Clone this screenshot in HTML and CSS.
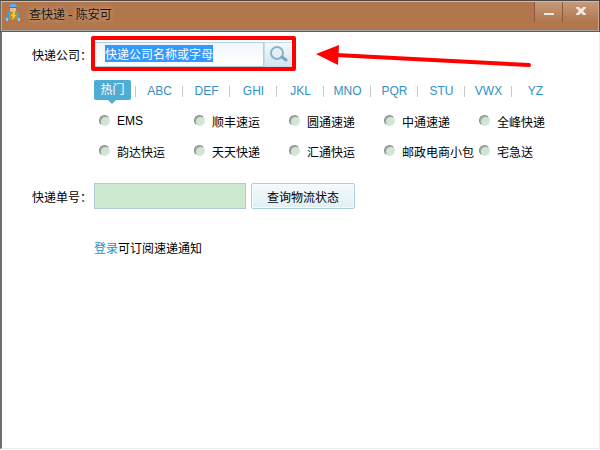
FILE: index.html
```html
<!DOCTYPE html>
<html lang="zh-CN">
<head>
  <meta charset="UTF-8">
  <meta name="viewport" content="width=device-width, initial-scale=1.0">
  <title>查快递 - 陈安可</title>
  <link rel="stylesheet" href="styles.css">
</head>
<body>
<div class="window">
  <header class="titlebar">
    <svg class="app-icon" width="14" height="18" viewBox="0 0 14 18">
      <path d="M1 9L3 7H11L13 9V16H1Z" fill="#3a9ce0"/>
      <path d="M4 4H10V7L8 8H6L4 7Z" fill="#e9bd91"/>
      <path d="M3 4V2L5 0H9L11 2V4Z" fill="#55b4ee"/>
      <path d="M3 3H11V4H3Z" fill="#2c7fc2"/>
      <path d="M0 14H2V17H0ZM12 14H14V17H12Z" fill="#8ccbf3"/>
      <path d="M3 8H12V16H3Z" fill="#c5882e"/>
      <path d="M8 8L5 12H7L6 16L10 11H8L9 8Z" fill="#ffe92e"/>
    </svg>
    <h1 class="title">查快递 - 陈安可</h1>
    <div class="window-buttons">
      <button class="window-button minimize" aria-label="最小化">
        <svg width="10" height="10" viewBox="0 0 10 10"><path d="M0 7H10V9H0Z" fill="#f3e8df"/></svg>
      </button>
      <button class="window-button close" aria-label="关闭">
        <svg width="10" height="10" viewBox="0 0 10 10"><path d="M0 1H3L5 3L7 1H10V2L7 5L10 8V9H7L5 7L3 9H0V8L3 5L0 2V1Z" fill="#f3e8df"/></svg>
      </button>
    </div>
  </header>
  <main class="content">
    <div class="row">
      <label class="row-label" for="company">快递公司：</label>
      <div class="search">
        <div class="search-field">
          <input type="text" class="search-input" id="company" value="快递公司名称或字母">
        </div>
        <button class="search-button" aria-label="搜索">
          <svg width="18" height="16" viewBox="0 0 18 16" fill="none">
            <circle cx="7" cy="7" r="6" fill="#e3f1f7" stroke="#8bb3c6" stroke-width="2"/>
            <path d="M12 11L16 14" stroke="#7ba6bb" stroke-width="3" stroke-linecap="round"/>
          </svg>
        </button>
        <div class="highlight"></div>
        <svg class="arrow" width="216" height="24" viewBox="0 0 216 24">
          <path d="M20 10L213 20" stroke="#ff0000" stroke-width="4" stroke-linecap="round"/>
          <path d="M0 9L23 0L22 20Z" fill="#ff0000"/>
        </svg>
      </div>
    </div>
    <div class="picker">
      <nav class="tabs">
        <a href="#hot" class="tab active">热门</a>
        <a href="#abc" class="tab">ABC</a>
        <a href="#def" class="tab">DEF</a>
        <a href="#ghi" class="tab">GHI</a>
        <a href="#jkl" class="tab">JKL</a>
        <a href="#mno" class="tab">MNO</a>
        <a href="#pqr" class="tab">PQR</a>
        <a href="#stu" class="tab">STU</a>
        <a href="#vwx" class="tab">VWX</a>
        <a href="#yz" class="tab">YZ</a>
      </nav>
      <div class="companies">
        <label class="company"><input type="radio" name="company">EMS</label>
        <label class="company"><input type="radio" name="company">顺丰速运</label>
        <label class="company"><input type="radio" name="company">圆通速递</label>
        <label class="company"><input type="radio" name="company">中通速递</label>
        <label class="company"><input type="radio" name="company">全峰快递</label>
        <label class="company"><input type="radio" name="company">韵达快运</label>
        <label class="company"><input type="radio" name="company">天天快递</label>
        <label class="company"><input type="radio" name="company">汇通快运</label>
        <label class="company"><input type="radio" name="company">邮政电商小包</label>
        <label class="company"><input type="radio" name="company">宅急送</label>
      </div>
    </div>
    <div class="row">
      <label class="row-label" for="number">快递单号：</label>
      <input type="text" class="number-input" id="number">
      <button class="query-button">查询物流状态</button>
    </div>
    <p class="notice"><a href="#login">登录</a>可订阅速递通知</p>
  </main>
</div>
<script>
  document.addEventListener('DOMContentLoaded', function () {
    const companyInput = document.getElementById('company');
    companyInput.focus();
    companyInput.select();
  });
</script>
</body>
</html>
```
FILE: styles.css
```css
body {
  margin: 0;
  background-color: #fff;
}

body,
input,
button {
  font-family: "Liberation Sans", "Noto Sans CJK SC", sans-serif;
  font-size: 12px;
  color: #000;
}

.window {
  box-sizing: border-box;
  min-height: 100vh;
  padding-bottom: 1px;
  display: flex;
  flex-direction: column;
}

.titlebar {
  box-sizing: border-box;
  height: 32px;
  display: flex;
  align-items: flex-start;
  background-color: #b1764c;
  border-top: 1px solid #4a4444;
  border-bottom: 1px solid #5e5e5e;
  border-left: 1px solid #6b6764;
  border-right: 1px solid #4d4a48;
  box-shadow: inset 0 1px #dcb9a2, inset 1px 0 #d0a78c, inset -1px 0 #d0a78c, inset 0 -1px #a3a3a3;
}

.app-icon {
  margin: 3px 0 0 5px;
}

.title {
  margin: 0 0 0 9px;
  font-size: 12px;
  font-weight: normal;
  line-height: 28px;
  color: #21150d;
  text-shadow: 0 0 5px #dfc2ae;
}

.window-buttons {
  margin: 1px 1px 0 auto;
  display: flex;
}

.window-button {
  height: 20px;
  padding: 4px 0 0;
  display: flex;
  align-items: flex-start;
  justify-content: center;
  background: linear-gradient(#c59a7c, #b1764c);
  border: none;
  border-left: 1px solid #8c5a3a;
}

.minimize {
  width: 28px;
}

.close {
  width: 36px;
}

.content {
  flex: 1;
  padding: 10px 30px;
  border-left: 2px solid #6e6e6e;
  border-right: 1px solid #ececec;
  border-bottom: 1px solid #ececec;
}

.row {
  display: flex;
  align-items: center;
}

.row-label {
  width: 62px;
  white-space: nowrap;
}

.search {
  position: relative;
  display: flex;
}

.search-field {
  box-sizing: border-box;
  width: 170px;
  height: 25px;
  padding: 2px 11px;
  border: 1px solid #afd0dd;
  border-left: none;
  background: linear-gradient(#f1f6fc, #fff);
}

.search-input {
  display: block;
  width: 100%;
  height: 17px;
  padding: 0;
  border: none;
  outline: none;
  background: none;
}

.search-input::selection {
  background-color: #3399ff;
  color: #fff;
}

.search-button {
  width: 30px;
  height: 25px;
  padding: 0 0 2px;
  display: flex;
  align-items: center;
  justify-content: center;
  background: linear-gradient(#f3fafd, #d0e6ef);
  border: 1px solid #c3dde7;
}

/* red frame and arrow drawn over the search box */
.highlight {
  position: absolute;
  top: -6px;
  left: -3px;
  right: -2px;
  bottom: -4px;
  box-sizing: border-box;
  border: 4px solid #ff0000;
  border-radius: 2px;
  pointer-events: none;
}

.arrow {
  position: absolute;
  top: 3px;
  left: 222px;
  pointer-events: none;
}

.picker {
  margin: 13px 0 17px;
  padding-left: 62px;
}

.tabs {
  display: flex;
}

.tab {
  position: relative;
  width: 47px;
  line-height: 22px;
  text-align: center;
  color: #338fc5;
  text-decoration: none;
}

.tab:not(.active) {
  box-sizing: border-box;
  padding-left: 2px;
}

.tab::before {
  content: "";
  position: absolute;
  left: 0;
  top: 6px;
  width: 1px;
  height: 11px;
  background-color: #c8c8c8;
}

.tab.active {
  width: 37px;
  height: 20px;
  margin-right: 4px;
  line-height: 20px;
  background-color: #4eadd4;
  border-radius: 2px;
  color: #fff;
}

.tab.active::before {
  left: 14px;
  top: 20px;
  width: 0;
  height: 0;
  background: none;
  border: 4px solid transparent;
  border-top-color: #4eadd4;
  border-bottom: none;
}

.companies {
  display: grid;
  grid-template-columns: repeat(5, 95px);
  grid-auto-rows: 30px;
  margin-top: 4px;
  padding-left: 5px;
}

.company {
  display: flex;
  align-items: center;
  gap: 7px;
  white-space: nowrap;
}

.company input {
  appearance: none;
  box-sizing: border-box;
  width: 11px;
  height: 11px;
  margin: 0 0 2px;
  border: 1px solid #8d8d8d;
  border-right-color: #e6e2dc;
  border-bottom-color: #e6e2dc;
  border-radius: 50%;
  background-color: #cce8cf;
  box-shadow: inset 1px 1px #a09d98;
}

.company input:checked {
  background-image: radial-gradient(#000 2px, transparent 2px);
}

.number-input {
  box-sizing: border-box;
  width: 152px;
  height: 26px;
  padding: 0 6px;
  border: 1px solid #b0ccda;
  background-color: #cce8cf;
}

.query-button {
  width: 104px;
  height: 26px;
  margin-left: 5px;
  padding: 0;
  border: 1px solid #a9cfdc;
  border-radius: 2px;
  background: linear-gradient(#f3fafc, #e0eff5);
  box-shadow: inset 0 0 0 1px #f8fcfe;
}

.notice {
  margin: 31px 0 0 62px;
  line-height: 18px;
}

.notice a {
  color: #2b8fc9;
  text-decoration: none;
}
```
